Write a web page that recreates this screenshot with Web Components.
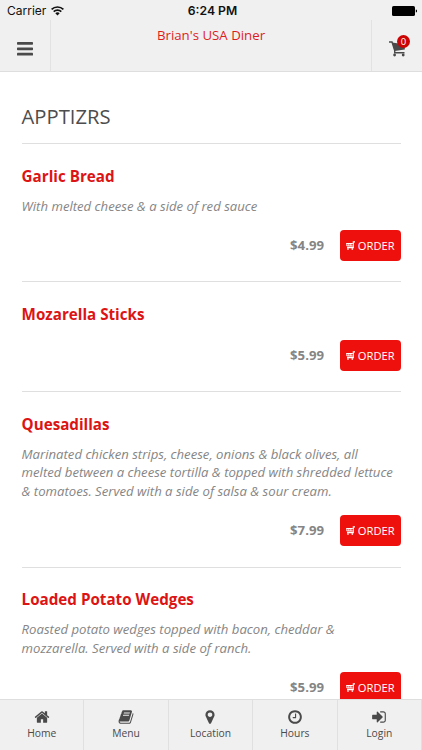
<!DOCTYPE html>
<html lang="en">
<head>
<meta charset="utf-8">
<meta name="viewport" content="width=device-width, initial-scale=1">
<title>Brian's USA Diner</title>
<style>
  html, body {
    margin: 0;
    height: 100%;
    overflow: hidden;
  }
  body {
    background: #fff;
    font-family: 'Open Sans', sans-serif;
    color: #4a4a4a;
  }
</style>
</head>
<body>
<diner-app></diner-app>

<script>
const ICONS = {
    home: 'M1472 992v480q0 26-19 45t-45 19h-384v-384h-256v384h-384q-26 0-45-19t-19-45v-480q0-1 .5-3t.5-3l575-474 575 474q1 2 1 6zm223-69l-62 74q-8 9-21 11h-3q-13 0-21-7l-692-577-692 577q-12 8-24 7-13-2-21-11l-62-74q-8-10-7-23.5t11-21.5l719-599q32-26 76-26t76 26l244 204v-195q0-14 9-23t23-9h192q14 0 23 9t9 23v408l219 182q10 8 11 21.5t-7 23.5z',
    book: 'M1703 478q40 57 18 129l-275 906q-19 64-76.5 107.5t-122.5 43.5h-923q-77 0-148.5-53.5t-99.5-131.5q-24-67-2-127 0-4 3-27t4-37q1-8-3-21.5t-3-19.5q2-11 8-21t16.5-23.5 16.5-23.5q23-38 45-91.5t30-91.5q3-10 .5-30t-.5-28q3-11 17-28t17-23q21-36 42-92t25-90q1-9-2.5-32t.5-28q4-13 22-30.5t22-22.5q19-26 42.5-84.5t27.5-96.5q1-8-3-25.5t-2-26.5q2-8 9-18t18-23 17-21q8-12 16.5-30.5t15-35 16-36 19.5-32 26.5-23.5 36-11.5 47.5 5.5l-1 3q38-9 51-9h761q74 0 114 56t18 130l-274 906q-36 119-71.5 153.5t-128.5 34.5h-869q-27 0-38 15-11 16-1 43 24 70 144 70h923q29 0 56-15.5t35-41.5l300-987q7-22 5-57 38 15 59 43zm-1064 2q-4 13 2 22.5t20 9.5h608q13 0 25.5-9.5t16.5-22.5l21-64q4-13-2-22.5t-20-9.5h-608q-13 0-25.5 9.5t-16.5 22.5zm-83 256q-4 13 2 22.5t20 9.5h608q13 0 25.5-9.5t16.5-22.5l21-64q4-13-2-22.5t-20-9.5h-608q-13 0-25.5 9.5t-16.5 22.5z',
    marker: 'M1152 640q0-106-75-181t-181-75-181 75-75 181 75 181 181 75 181-75 75-181zm256 0q0 109-33 179l-364 774q-16 33-47.5 52t-67.5 19-67.5-19-46.5-52l-365-774q-33-70-33-179 0-212 150-362t362-150 362 150 150 362z',
    clock: 'M1024 544v448q0 14-9 23t-23 9h-320q-14 0-23-9t-9-23v-64q0-14 9-23t23-9h224v-352q0-14 9-23t23-9h64q14 0 23 9t9 23zm416 352q0-148-73-273t-198-198-273-73-273 73-198 198-73 273 73 273 198 198 273 73 273-73 198-198 73-273zm224 0q0 209-103 385.5t-279.5 279.5-385.5 103-385.5-103-279.5-279.5-103-385.5 103-385.5 279.5-279.5 385.5-103 385.5 103 279.5 279.5 103 385.5z',
    login: 'M1312 896q0 26-19 45l-544 544q-19 19-45 19t-45-19-19-45v-288h-448q-26 0-45-19t-19-45v-384q0-26 19-45t45-19h448v-288q0-26 19-45t45-19 45 19l544 544q19 19 19 45zm352-352v704q0 119-84.5 203.5t-203.5 84.5h-320q-13 0-22.5-9.5t-9.5-22.5q0-4-1-20t-.5-26.5 3-23.5 10-19.5 20.5-6.5h320q66 0 113-47t47-113v-704q0-66-47-113t-113-47h-312l-11.5-1-11.5-3-8-5.5-7-9-2-13.5q0-4-1-20t-.5-26.5 3-23.5 10-19.5 20.5-6.5h320q119 0 203.5 84.5t84.5 203.5z'
};

class StatusBar extends HTMLElement {
    constructor() {
        super();
        this.attachShadow({mode: 'open'});
    }

    connectedCallback() {
        this.shadowRoot.innerHTML = `
      <style>
        :host {
          display: grid;
          grid-template-columns: 1fr auto 1fr;
          align-items: center;
          height: 20px;
          padding: 2px 5px 0 7px;
          box-sizing: border-box;
          font-family: Inter, sans-serif;
          font-size: 12px;
          line-height: 18px;
          color: #111;
        }
        .carrier {
          display: flex;
          align-items: center;
          gap: 5px;
        }
        .time {
          font-weight: 600;
          font-size: 12.2px;
          padding-left: 1px;
        }
        .battery {
          justify-self: end;
        }
        svg {
          display: block;
        }
      </style>
      <span class="carrier">Carrier
        <svg width="13" height="10" viewBox="0 0 13 10">
          <g fill="none" stroke="#111" stroke-width="1.7">
            <path d="M.6 3.4a8.4 8.4 0 0 1 11.8 0"/>
            <path d="M2.7 5.7a5.4 5.4 0 0 1 7.6 0"/>
          </g>
          <path fill="#111" d="M4.3 7.3a3.1 3.1 0 0 1 4.4 0L6.5 9.6z"/>
        </svg>
      </span>
      <span class="time">6:24 PM</span>
      <svg class="battery" width="25.5" height="10" viewBox="0 0 25.5 10">
        <rect width="23" height="10" rx="1.6"/>
        <path d="M23.8 3.4q1.4.4 1.4 1.6t-1.4 1.6z"/>
      </svg>
    `;
    }
}

class NavBar extends HTMLElement {
    constructor() {
        super();
        this.attachShadow({mode: 'open'});
    }

    connectedCallback() {
        this.shadowRoot.innerHTML = `
      <style>
        :host {
          display: grid;
          grid-template-columns: 51px 1fr 51px;
          height: 52px;
          border-bottom: 1px solid #dedede;
          box-sizing: border-box;
        }
        .side {
          display: flex;
          align-items: center;
          justify-content: center;
        }
        .menu {
          border-right: 1px solid #e2e2e2;
          padding-top: 6px;
        }
        .cart {
          position: relative;
          border-left: 1px solid #e2e2e2;
          padding-top: 7px;
        }
        .title {
          text-align: center;
          font-size: 13.25px;
          line-height: 19px;
          padding-top: 6px;
          color: #dd1d1d;
        }
        .badge {
          position: absolute;
          top: 15px;
          left: 25px;
          width: 13px;
          height: 13px;
          border-radius: 50%;
          background: #cc0404;
          color: #fff;
          font-size: 9.5px;
          line-height: 13px;
          text-align: center;
        }
      </style>
      <div class="side menu">
        <svg width="16" height="14" viewBox="0 0 16 14" fill="#4a4a4a">
          <rect y="0" width="16" height="2.8" rx=".7"/>
          <rect y="5.4" width="16" height="2.8" rx=".7"/>
          <rect y="10.8" width="16" height="2.8" rx=".7"/>
        </svg>
      </div>
      <div class="title"><slot></slot></div>
      <div class="side cart">
        <svg width="17" height="16" viewBox="0 0 17 16">
          <path d="M0 1h3l2.7 8.6v2.2h9.8" fill="none" stroke="#4a4a4a" stroke-width="1.4"/>
          <path d="M3.2 1.6 15.8 3.4v5L5.6 10z" fill="#4a4a4a"/>
          <circle cx="5.6" cy="14" r="1.4" fill="#4a4a4a"/>
          <circle cx="14.2" cy="14" r="1.4" fill="#4a4a4a"/>
        </svg>
        <span class="badge">0</span>
      </div>
    `;
    }
}

class OrderButton extends HTMLElement {
    constructor() {
        super();
        this.attachShadow({mode: 'open'});
    }

    connectedCallback() {
        this.shadowRoot.innerHTML = `
      <style>
        :host {
          display: block;
        }
        button {
          display: flex;
          align-items: center;
          justify-content: center;
          gap: 3px;
          width: 60.5px;
          height: 31px;
          padding: 0;
          border: none;
          border-radius: 4px;
          background: #ee100c;
          color: #fff;
          font-family: inherit;
          font-size: 11.2px;
        }
      </style>
      <button type="button">
        <svg width="9" height="9" viewBox="0 0 9 9" fill="none" stroke="#fff">
          <path d="M.2 2.5h6.6M.8 5h6M.9 2.5V5M2.9 2.5V5M4.9 2.5V5" stroke-width="1"/>
          <path d="M9 .9H7.3v5.7H1" stroke-width="1.1"/>
          <path d="M1.2 8h1.5M5.6 8h1.5" stroke-width="1.4"/>
        </svg>
        <slot></slot>
      </button>
    `;
    }
}

class MenuItem extends HTMLElement {
    constructor() {
        super();
        this.attachShadow({mode: 'open'});
    }

    connectedCallback() {
        const description = this.getAttribute('description');

        this.shadowRoot.innerHTML = `
      <style>
        :host {
          display: block;
          border-top: 1px solid #dfdfdf;
          padding: 20.5px 0 20.2px;
        }
        h2 {
          margin: 0;
          font-size: 15.2px;
          line-height: 23px;
          font-weight: 700;
          color: #dc1414;
        }
        p {
          margin: 9px 0 .5px;
          font-size: 13.15px;
          line-height: 18.5px;
          font-style: italic;
          color: #858585;
        }
        .buy {
          display: flex;
          align-items: center;
          justify-content: flex-end;
          gap: 16px;
          padding-top: 14.5px;
          height: 31px;
        }
        .price {
          font-size: 13.2px;
          line-height: 18px;
          margin-bottom: 1px;
          font-weight: 700;
          color: #858585;
        }
      </style>
      <h2>${this.getAttribute('name')}</h2>
      ${description ? `<p>${description}</p>` : ''}
      <div class="buy">
        <span class="price">${this.getAttribute('price')}</span>
        <order-button>ORDER</order-button>
      </div>
    `;
    }
}

class MenuSection extends HTMLElement {
    constructor() {
        super();
        this.attachShadow({mode: 'open'});
    }

    connectedCallback() {
        this.shadowRoot.innerHTML = `
      <style>
        :host {
          display: block;
          padding: 30px 21.5px 0 21.6px;
        }
        h1 {
          margin: -1px 0 12px;
          font-size: 20.2px;
          line-height: 30px;
          font-weight: 400;
          color: #4d4d4d;
        }
      </style>
      <h1>${this.getAttribute('heading')}</h1>
      <slot></slot>
    `;
    }
}

class TabItem extends HTMLElement {
    constructor() {
        super();
        this.attachShadow({mode: 'open'});
    }

    connectedCallback() {
        this.shadowRoot.innerHTML = `
      <style>
        :host {
          display: flex;
          flex-direction: column;
          align-items: center;
          padding-top: 9px;
          font-size: 10.3px;
          line-height: 15px;
          color: #4a4a4a;
          border-right: 1px solid #e0e0e0;
        }
        svg {
          display: block;
          margin-bottom: 1px;
        }
      </style>
      <svg width="16" height="16" viewBox="0 0 1792 1792" fill="#4a4a4a">
        <path d="${ICONS[this.getAttribute('icon')]}"/>
      </svg>
      <slot></slot>
    `;
    }
}

class TabBar extends HTMLElement {
    constructor() {
        super();
        this.attachShadow({mode: 'open'});
    }

    connectedCallback() {
        this.shadowRoot.innerHTML = `
      <style>
        :host {
          display: grid;
          grid-template-columns: repeat(5, 1fr);
          height: 51px;
          box-sizing: border-box;
          background: #f0f0f0;
          border-top: 1px solid #dedede;
        }
      </style>
      <slot></slot>
    `;
    }
}

class DinerApp extends HTMLElement {
    constructor() {
        super();
        this.attachShadow({mode: 'open'});
    }

    connectedCallback() {
        this.shadowRoot.innerHTML = `
      <style>
        :host {
          display: flex;
          flex-direction: column;
          height: 100vh;
        }
        header {
          flex: none;
          background: #f0f0f0;
        }
        main {
          flex: 1;
          min-height: 0;
          overflow: hidden;
        }
        tab-bar {
          flex: none;
        }
      </style>
      <header>
        <status-bar></status-bar>
        <nav-bar>Brian's USA Diner</nav-bar>
      </header>
      <main>
        <menu-section heading="APPTIZRS">
          <menu-item name="Garlic Bread" price="$4.99"
            description="With melted cheese &amp; a side of red sauce"></menu-item>
          <menu-item name="Mozarella Sticks" price="$5.99"></menu-item>
          <menu-item name="Quesadillas" price="$7.99"
            description="Marinated chicken strips, cheese, onions &amp; black olives, all melted between a cheese tortilla &amp; topped with shredded lettuce &amp; tomatoes. Served with a side of salsa &amp; sour cream."></menu-item>
          <menu-item name="Loaded Potato Wedges" price="$5.99"
            description="Roasted potato wedges topped with bacon, cheddar &amp; mozzarella. Served with a side of ranch."></menu-item>
        </menu-section>
      </main>
      <tab-bar>
        <tab-item icon="home">Home</tab-item>
        <tab-item icon="book">Menu</tab-item>
        <tab-item icon="marker">Location</tab-item>
        <tab-item icon="clock">Hours</tab-item>
        <tab-item icon="login">Login</tab-item>
      </tab-bar>
    `;
    }
}

customElements.define('status-bar', StatusBar);
customElements.define('nav-bar', NavBar);
customElements.define('order-button', OrderButton);
customElements.define('menu-item', MenuItem);
customElements.define('menu-section', MenuSection);
customElements.define('tab-item', TabItem);
customElements.define('tab-bar', TabBar);
customElements.define('diner-app', DinerApp);
</script>
</body>
</html>
